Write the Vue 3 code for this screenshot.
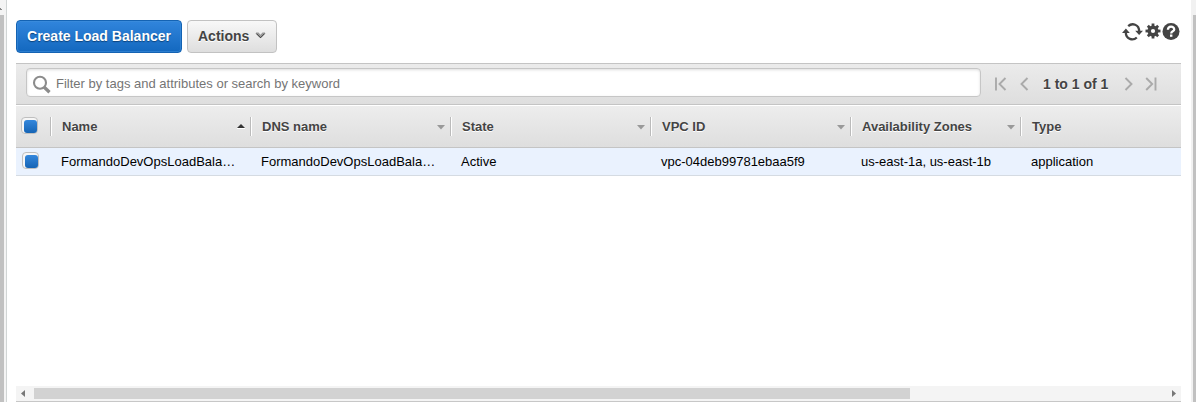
<script setup>
const columns = [
  { label: 'Name', value: 'FormandoDevOpsLoadBala…', width: 200, sort: 'asc' },
  { label: 'DNS name', value: 'FormandoDevOpsLoadBala…', width: 200 },
  { label: 'State', value: 'Active', width: 200 },
  { label: 'VPC ID', value: 'vpc-04deb99781ebaa5f9', width: 200 },
  { label: 'Availability Zones', value: 'us-east-1a, us-east-1b', width: 170 },
  { label: 'Type', value: 'application', width: 161 },
]
const template = '34px ' + columns.map(c => c.width + 'px').join(' ')
</script>

<template>
  <div class="page">
    <div class="side left">
      <div class="rail"><svg class="up" width="4" height="15" viewBox="0 0 4 15"><path d="M0 8h1v1h1v1H0z" fill="#888" /></svg><div class="thumb"></div></div>
    </div>
    <main>
      <header class="actions">
        <button class="btn primary">Create Load Balancer</button>
        <button class="btn plain">Actions
          <svg width="11" height="7" viewBox="0 0 11 7"><path d="M1 .5h2.500l2 2.200 2-2.200H10v1L5.500 6.200 1 1.500z" fill="#999" /><path d="m1.300 1.600 4.200 4.200 4.200-4.200" fill="none" stroke="#333" stroke-width="1" /></svg>
        </button>
        <div class="tools">
          <svg width="21" height="20" viewBox="0 0 21 20">
            <g fill="none" stroke="#444" stroke-width="2.300"><path d="M6.200 4.200C10 .6 17.200 2.200 17.200 9.500" /><path d="M14.800 15.500C11 19.100 3.800 17.500 3.800 10.300" /></g>
            <path d="M13.200 8.700H21l-3.900 4.300zM0 10.900h7.800L3.900 6.600z" fill="#444" />
          </svg>
          <svg class="gear" width="16" height="20" viewBox="0 0 16 20">
            <g fill="#444"><path d="M6.600 1.500h2.800v15H6.600z" /><path d="M6.600 1.500h2.800v15H6.600z" transform="rotate(90 8 9)" /><path d="M6.600 1.700h2.800v14.600H6.600z" transform="rotate(45 8 9)" /><path d="M6.600 1.700h2.800v14.600H6.600z" transform="rotate(-45 8 9)" /><circle cx="8" cy="9" r="5.500" /></g>
            <circle cx="8" cy="9" r="2.100" fill="#fff" />
          </svg>
          <svg class="help" width="18" height="20" viewBox="0 0 18 20">
            <circle cx="9" cy="9.500" r="8.500" fill="#444" /><path d="M5.900 7.800C6 3.700 12.200 3.700 12.200 7.400 12.200 9.500 9.200 9.200 9.200 11.400" fill="none" stroke="#fff" stroke-width="2.300" /><path d="M8 12.500h2.400v2.300H8z" fill="#fff" />
          </svg>
        </div>
      </header>
      <section class="filter">
        <div class="search">
          <svg width="19" height="19" viewBox="0 0 19 19"><circle cx="8" cy="7.800" r="6" fill="none" stroke="#8c8c8c" stroke-width="2.100" /><path d="m12 12 5.500 5.200" stroke="#8c8c8c" stroke-width="3.300" /></svg>
          <span>Filter by tags and attributes or search by keyword</span>
        </div>
        <div class="pager">
          <svg width="12" height="14" viewBox="0 0 12 14"><path d="M1 .5v13M10.500 1 4.500 7l6 6" /></svg>
          <svg class="prev" width="9" height="14" viewBox="0 0 9 14"><path d="M7.500 1 1.500 7l6 6" /></svg>
          <b>1 to 1 of 1</b>
          <svg class="next" width="9" height="14" viewBox="0 0 9 14"><path d="m1.500 1 6 6-6 6" /></svg>
          <svg width="12" height="14" viewBox="0 0 12 14"><path d="M10.500 .5v13M1.200 1l6 6-6 6" /></svg>
        </div>
      </section>
      <section class="grid head" :style="{ gridTemplateColumns: template }">
        <div class="pick"><i class="check"></i></div>
        <div v-for="c in columns" :key="c.label" class="cell">
          <span>{{ c.label }}</span>
          <svg v-if="c.sort" class="asc" width="8" height="5" viewBox="0 0 8 5"><path d="M0 4 4 0l4 4z" fill="#333" /><path d="M0 4.500h8" stroke="#fff" /></svg>
          <svg v-else-if="c.label !== 'Type'" width="8" height="5" viewBox="0 0 8 5"><path d="M0 0h8L4 4.500z" fill="#999" /></svg>
        </div>
      </section>
      <section class="grid row" :style="{ gridTemplateColumns: template }">
        <div class="pick"><i class="check"></i></div>
        <div v-for="c in columns" :key="c.label" class="cell">{{ c.value }}</div>
      </section>
      <div class="blank"></div>
      <div class="hscroll">
        <svg width="18" height="15" viewBox="0 0 18 15"><path d="M9 4v7L5 7.500z" fill="#777" /></svg>
        <div class="bar"></div>
        <svg class="end" width="15" height="15" viewBox="0 0 15 15"><path d="M6 4v7l4-3.500z" fill="#777" /></svg>
      </div>
    </main>
    <div class="side right"><div class="thumb"></div></div>
  </div>
</template>

<style>
body { margin: 0; overflow: hidden; background: #fff; }
</style>
<style scoped>
* { box-sizing: border-box; }
svg { display: block; flex: none; }
.page { display: flex; width: 1196px; height: 402px; font-family: "Liberation Sans", Arial, sans-serif; color: #444; }
.side { flex: none; background: #f4f4f4; }
.left { width: 7px; border-right: 1px solid #d1d5d5; }
.rail { width: 4px; height: 402px; }
.left .thumb { height: 387px; background: #c1c1c1; }
.right { width: 5px; padding: 15px 0 0 2px; background: #f1f1f1; }
.right .thumb { height: 387px; background: #c1c1c1; }
main { width: 1165px; margin: 0 10px 0 9px; display: flex; flex-direction: column; }
.actions { height: 63px; padding-top: 20px; display: flex; align-items: flex-start; }
.btn { height: 33px; padding: 0 0 1px; border-radius: 4px; font: bold 14px "Liberation Sans", Arial, sans-serif; }
.primary { width: 166px; color: #fff; border: 1px solid #1463b3; background: linear-gradient(#3185dc, #1368bf); box-shadow: inset 0 0 0 1px #4290dc88; text-shadow: 0 1px 1px #0b437c; }
.plain { width: 90px; margin-left: 5px; display: flex; align-items: center; padding-left: 10px; color: #444; border: 1px solid #c2c2c2; background: linear-gradient(#f8f8f8, #dedede); text-shadow: 0 1px #fff; }
.plain svg { margin: -1px 0 0 6px; }
.tools { margin-left: auto; display: flex; height: 20px; margin-top: 2px; }
.tools .gear { margin: 0 1px 0 1.5px; }
.tools .help { margin-right: 1.5px; }
.filter { height: 42px; display: flex; padding: 4px 0 0 10px; border-top: 1px solid #c4c4c4; border-bottom: 1px solid #c4c4c4; background: linear-gradient(#ebebeb, #dedede); }
.search { width: 955px; height: 29px; border: 1px solid #c6c6c6; border-radius: 4px; background: #fff; box-shadow: inset 0 1px 3px #ddd; display: flex; align-items: center; color: #757575; font-size: 13px; }
.search svg { margin: 4px 5px 0 5px; }
.search span { padding-top: 2px; }
.pager { display: flex; align-items: center; height: 32px; margin-left: 14px; }
.pager svg { fill: none; stroke: #aaa; stroke-width: 1.9; }
.pager .prev { margin-left: 13px; }
.pager b { font-size: 14px; line-height: 16px; margin: 0 14px 0 14px; width: 66px; white-space: nowrap; text-shadow: 0 1px #fff; }
.pager .next { margin: 0 12px 0 1px; }
.grid { display: grid; }
.head { height: 43px; border-top: 1px solid #fff; border-bottom: 1px solid #c4c4c4; background: linear-gradient(#ededed, #dedede); font-weight: bold; font-size: 13px; }
.head .cell { display: flex; align-items: center; height: 19px; margin-top: 11px; padding: 0 6px 0 11px; border-left: 1px solid #bbb; box-shadow: inset 1px 0 #fff; text-shadow: 0 1px #fff; }
.head .cell span { flex: 1; }
.head .cell svg { margin: 1px -.5px 0 0; }
.head .cell .asc { margin-top: 0; }
.pick { display: flex; }
.check { width: 17px; height: 17px; border: 1px solid #bfbfbf; border-radius: 4px; background: #f6f6f6; position: relative; }
.check::after { content: ""; position: absolute; inset: 2px 0 0 2px; background: linear-gradient(#3487dc, #1564b5); border-radius: 3px; }
.head .check { margin: 11px 0 0 5px; }
.row { height: 28px; background: #eaf2fe; border-bottom: 1px solid #d5dbe2; color: #000; font-size: 13px; }
.row .check { margin: 4px 0 0 6px; }
.row .cell { line-height: 27px; padding: 0 11px; white-space: nowrap; }
.blank { flex: 1; }
.hscroll { height: 16px; display: flex; background: #f4f4f4; border-bottom: 1px solid #c7c7c7; }
.bar { width: 876px; height: 11px; margin-top: 2px; background: #d2d2d2; }
.end { margin-left: auto; }
</style>
